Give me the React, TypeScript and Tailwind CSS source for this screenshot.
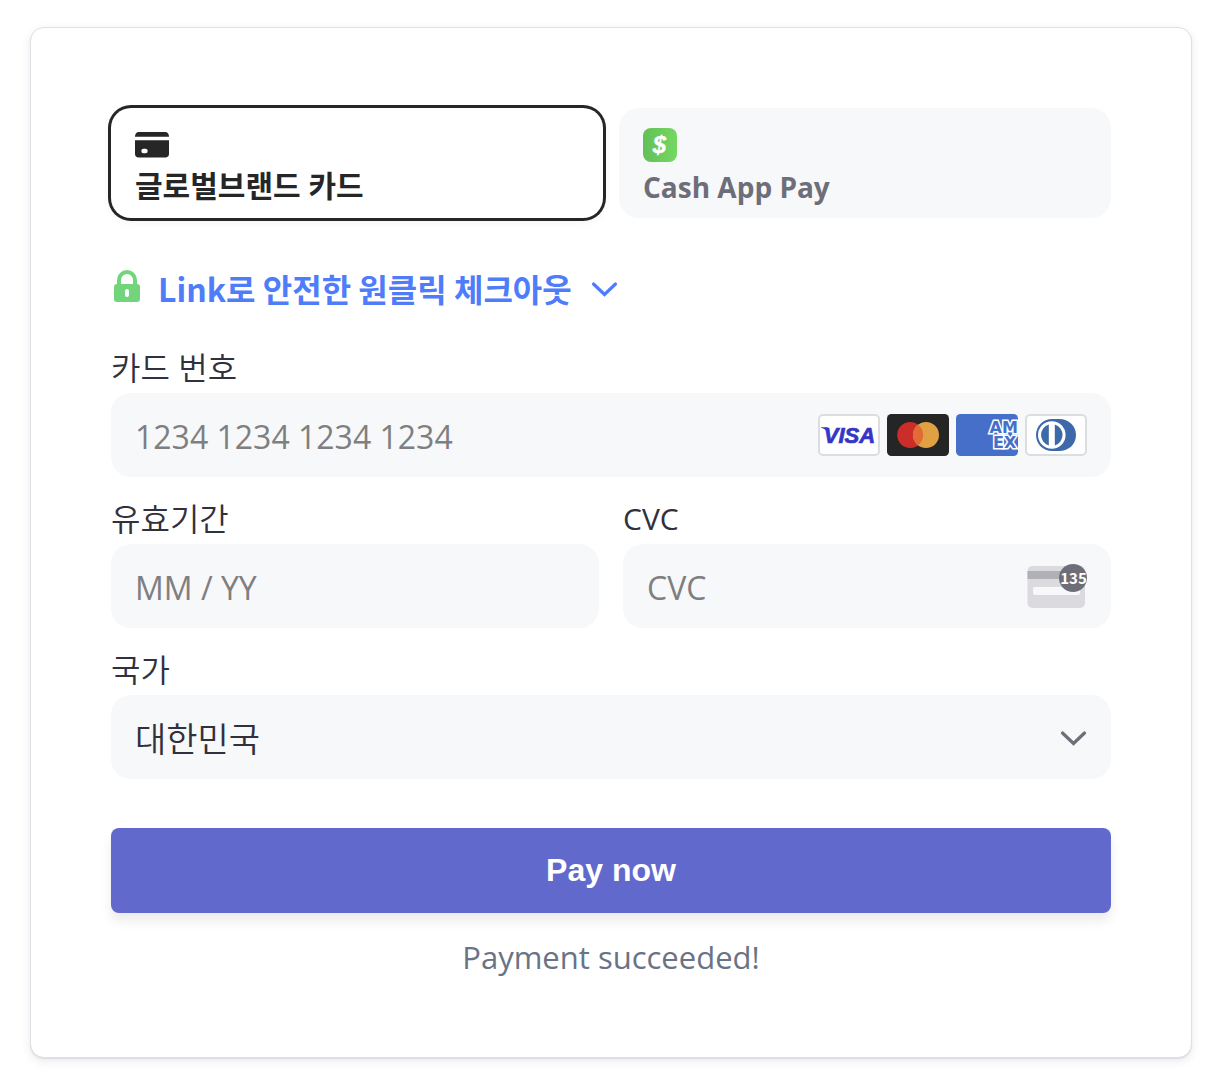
import type { ReactNode } from "react";

function CardIcon() {
  return (
    <svg className="h-[34px] w-[34px]" viewBox="0 0 34 34" aria-hidden="true">
      <path fill="#262626" d="M0 8.500C0 6 1.500 4 4 4H30C32.500 4 34 6 34 8.500V8.700H0Z" />
      <path
        fill="#262626"
        fillRule="evenodd"
        d="M0 12.300H34V26C34 28 32.500 29.500 30.500 29.500H3.500C1.500 29.500 0 28 0 26ZM8.500 20.800A2.200 2.200 0 0 0 8.500 25.200H10.500A2.200 2.200 0 0 0 10.500 20.800Z"
      />
    </svg>
  );
}

function CashAppIcon() {
  return (
    <svg className="h-[34px] w-[34px]" viewBox="0 0 34 34" aria-hidden="true">
      <defs>
        <linearGradient id="cash" x1="0" y1="0" x2="1" y2="0">
          <stop offset="0" stopColor="#64bf57" />
          <stop offset="1" stopColor="#74d862" />
        </linearGradient>
      </defs>
      <rect width="34" height="34" rx="8" fill="url(#cash)" />
      <text
        x="16.5"
        y="25"
        textAnchor="middle"
        fill="#fff"
        stroke="#fff"
        strokeWidth="0.4"
        className="font-['Liberation_Sans',Arial,sans-serif] text-[24px] font-bold italic"
      >
        $
      </text>
    </svg>
  );
}

function LockIcon() {
  return (
    <svg className="h-9 w-[26px]" viewBox="0 0 26 36" aria-hidden="true">
      <path d="M5 16V10a8 8 0 0 1 16 0V16" fill="none" stroke="#72d47b" strokeWidth="4" />
      <path
        fill="#72d47b"
        fillRule="evenodd"
        d="M3 14H23A3 3 0 0 1 26 17V29A3 3 0 0 1 23 32H3A3 3 0 0 1 0 29V17A3 3 0 0 1 3 14ZM11 21V25A2 2 0 0 0 15 25V21A2 2 0 0 0 11 21Z"
      />
    </svg>
  );
}

function Chevron() {
  return (
    <svg className="h-[18px] w-[28px]" viewBox="0 0 28 18" fill="none" aria-hidden="true">
      <path d="M3.500 5L14.500 15.500L25.500 5" stroke="currentColor" strokeWidth="3.200" strokeLinecap="round" strokeLinejoin="miter" />
    </svg>
  );
}

function Visa() {
  return (
    <svg className="h-[42px] w-[62px]" viewBox="0 0 62 42" role="img" aria-label="Visa">
      <rect x="1" y="1" width="60" height="40" rx="4" fill="#fff" stroke="#dcdddf" strokeWidth="2" />
      <path d="M3 13.200H9.500L11 20C9 16.500 6 14.500 3 13.800Z" fill="#3436c5" />
      <text
        x="31.500"
        y="29"
        textAnchor="middle"
        fill="#3436c5"
        stroke="#3436c5"
        strokeWidth="0.7"
        className="font-['Liberation_Sans',Arial,sans-serif] text-[22px] font-bold italic"
      >
        VISA
      </text>
    </svg>
  );
}

function Mastercard() {
  return (
    <svg className="h-[42px] w-[62px]" viewBox="0 0 62 42" role="img" aria-label="Mastercard">
      <rect width="62" height="42" rx="4.500" fill="#252525" />
      <circle cx="23.200" cy="21" r="13" fill="#cb2d2b" />
      <circle cx="39" cy="21" r="13" fill="#e0a144" />
      <path d="M31.100 10.700A13 13 0 0 1 31.100 31.300A13 13 0 0 1 31.100 10.700Z" fill="#e16b34" />
    </svg>
  );
}

function Amex() {
  return (
    <svg className="h-[42px] w-[62px]" viewBox="0 0 62 42" role="img" aria-label="American Express">
      <defs>
        <clipPath id="amex">
          <rect width="62" height="42" rx="4.500" />
        </clipPath>
      </defs>
      <g clipPath="url(#amex)">
        <rect width="62" height="42" fill="#466fca" />
        <text
          fill="#466fca"
          stroke="#fff"
          strokeWidth="3"
          paintOrder="stroke"
          strokeLinejoin="miter"
          className="font-['DejaVu_Sans',sans-serif] text-[16px] font-bold"
        >
          <tspan x="33.500" y="19">AM</tspan>
          <tspan x="37" y="33.500">EX</tspan>
        </text>
      </g>
    </svg>
  );
}

function Diners() {
  return (
    <svg className="h-[42px] w-[62px]" viewBox="0 0 62 42" role="img" aria-label="Diners Club">
      <rect x="1" y="1" width="60" height="40" rx="4" fill="#fff" stroke="#dcdddf" strokeWidth="2" />
      <path d="M27 5H34C44 5 51 12 51 21S44 37 34 37H27C18 37 11 30 11 21S18 5 27 5Z" fill="#3d68a9" />
      <circle cx="26.800" cy="21" r="13.800" fill="#fff" />
      <path d="M23.800 10.500A11 11 0 0 0 23.800 31.500Z" fill="#3d68a9" />
      <path d="M29.800 10.500A11 11 0 0 1 29.800 31.500Z" fill="#3d68a9" />
    </svg>
  );
}

function CvcIcon() {
  return (
    <svg className="h-[46px] w-[60px]" viewBox="0 0 60 46" aria-hidden="true">
      <rect x="0.5" y="3" width="57.500" height="42" rx="5" fill="#dadadf" />
      <rect x="0.5" y="8" width="57.500" height="8" fill="#b0b0b6" />
      <rect x="6" y="24" width="47" height="8" rx="2" fill="#f7f8fa" />
      <circle cx="46" cy="15" r="14" fill="#6d6e78" />
      <text x="46.500" y="20.500" textAnchor="middle" fill="#fff" className="font-['Noto_Sans_CJK_KR',sans-serif] text-[15px] font-bold">
        135
      </text>
    </svg>
  );
}

const input =
  "h-[84px] w-full appearance-none rounded-[20px] bg-[#f7f8fa] px-6 pt-0.5 text-[32px] text-[#30313d] placeholder:text-[#7f7f81] outline-none";
const select =
  "h-[84px] w-full appearance-none rounded-[20px] bg-[#f7f8fa] px-6 pt-1 text-[34px] font-[350] text-[#30313d] outline-none";

function Field({ id, label, children }: { id: string; label: ReactNode; children: ReactNode }) {
  return (
    <div className="flex min-w-0 flex-col gap-[7px]">
      <label htmlFor={id} className="text-[32px] leading-9 font-[350] text-[#30313d]">
        {label}
      </label>
      <div className="relative">{children}</div>
    </div>
  );
}

export default function App() {
  return (
    <main className="min-h-screen bg-white px-6 py-[27px] pl-[30px] font-['Open_Sans','Noto_Sans_CJK_KR',sans-serif]">
      <form
        onSubmit={(e) => e.preventDefault()}
        className="rounded-[14px] border border-[#dfe0e3] bg-white p-20 shadow-[0_1px_1px_rgba(50,50,93,0.1),0_3px_10px_rgba(50,50,93,0.1)]"
      >
        <div className="grid grid-cols-2 gap-4">
          <button
            type="button"
            aria-pressed="true"
            className="flex h-[110px] flex-col items-start rounded-[20px] bg-white px-6 pt-5 text-left text-[#262626] shadow-[0_0_0_3px_#262626,0_3px_12px_rgba(0,0,0,0.06)]"
          >
            <CardIcon />
            <span className="text-[30px] leading-[48px] font-bold">글로벌브랜드 카드</span>
          </button>
          <button
            type="button"
            aria-pressed="false"
            className="flex h-[110px] flex-col items-start rounded-[20px] bg-[#f7f8fa] px-6 pt-5 text-left text-[#6d6e78]"
          >
            <CashAppIcon />
            <span className="text-[28px] leading-[50px] font-bold">Cash App Pay</span>
          </button>
        </div>

        <button type="button" className="mt-[46px] flex h-12 items-center gap-[18px] pl-[3px] text-[#4f7df9]">
          <LockIcon />
          <span className="font-['Noto_Sans_CJK_KR',sans-serif] text-[32px] leading-[46px] font-bold">
            Link로 안전한 원클릭 체크아웃
          </span>
          <Chevron />
        </button>

        <div className="mt-[38px] flex flex-col gap-6">
          <Field id="number" label="카드 번호">
            <input id="number" inputMode="numeric" placeholder="1234 1234 1234 1234" className={input} />
            <div className="pointer-events-none absolute inset-y-0 right-6 flex items-center gap-[7px]">
              <Visa />
              <Mastercard />
              <Amex />
              <Diners />
            </div>
          </Field>
          <div className="grid grid-cols-2 gap-6">
            <Field id="expiry" label="유효기간">
              <input id="expiry" inputMode="numeric" placeholder="MM / YY" className={input} />
            </Field>
            <Field id="cvc" label={<span className="block text-[30px] leading-9 font-normal">CVC</span>}>
              <input id="cvc" inputMode="numeric" placeholder="CVC" className={input} />
              <div className="pointer-events-none absolute inset-y-0 right-6 flex items-center">
                <CvcIcon />
              </div>
            </Field>
          </div>
          <Field id="country" label="국가">
            <select id="country" className={select}>
              <option>대한민국</option>
            </select>
            <div className="pointer-events-none absolute inset-y-0 right-6 flex items-center text-[#6d6e78]">
              <Chevron />
            </div>
          </Field>
        </div>

        <button
          type="submit"
          className="mt-[49px] h-[85px] w-full rounded-lg bg-[#6269cc] pb-0.5 font-['Liberation_Sans',Arial,sans-serif] text-[32px] font-bold text-white shadow-[0_8px_12px_rgba(0,0,0,0.08)]"
        >
          Pay now
        </button>
        <p role="status" className="mt-6 text-center text-[31px] leading-10 text-[#697386]">
          Payment succeeded!
        </p>
      </form>
    </main>
  );
}
